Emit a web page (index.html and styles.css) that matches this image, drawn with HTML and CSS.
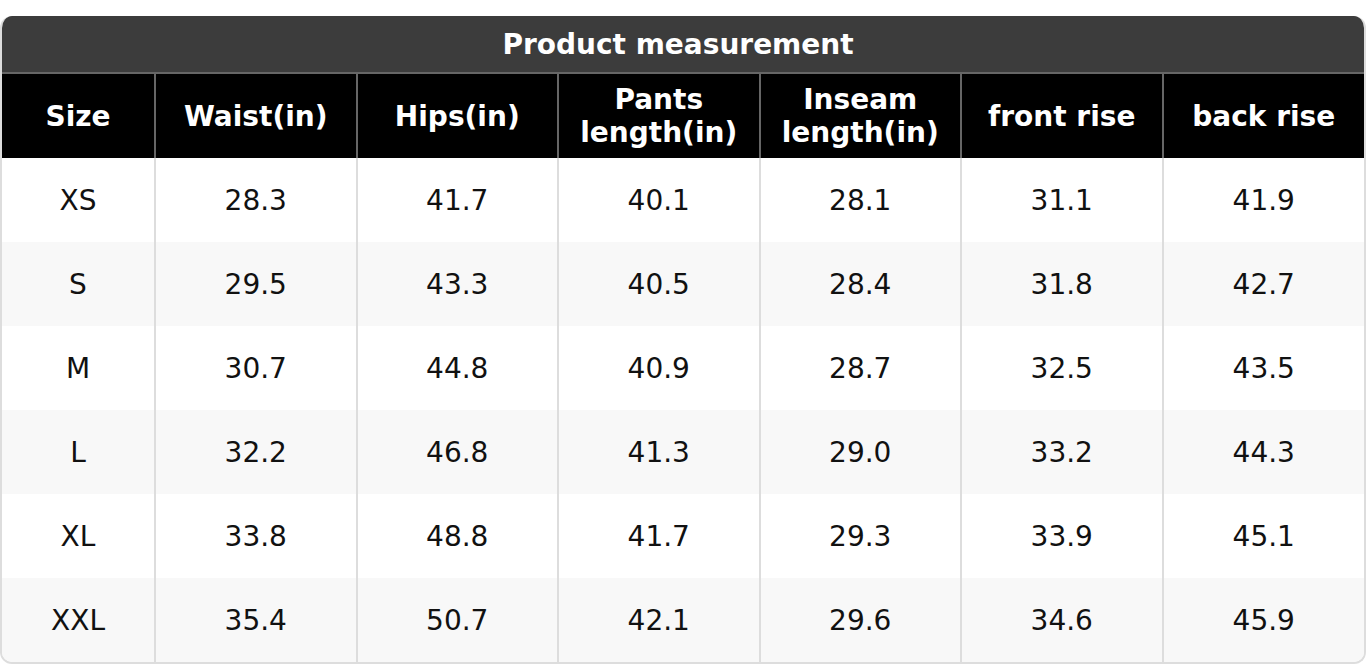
FILE: index.html
```html
<!DOCTYPE html>
<html>
<head>
<meta charset="utf-8">
<link rel="stylesheet" href="styles.css">
</head>
<body>
<div class="chart">
  <div class="title">Product measurement</div>
  <table class="grid">
    <colgroup>
      <col class="c-size"><col><col><col><col><col><col>
    </colgroup>
    <thead>
      <tr>
        <th>Size</th><th>Waist(in)</th><th>Hips(in)</th><th>Pants<br>length(in)</th><th>Inseam<br>length(in)</th><th>front rise</th><th>back rise</th>
      </tr>
    </thead>
    <tbody>
      <tr><td>XS</td><td>28.3</td><td>41.7</td><td>40.1</td><td>28.1</td><td>31.1</td><td>41.9</td></tr>
      <tr><td>S</td><td>29.5</td><td>43.3</td><td>40.5</td><td>28.4</td><td>31.8</td><td>42.7</td></tr>
      <tr><td>M</td><td>30.7</td><td>44.8</td><td>40.9</td><td>28.7</td><td>32.5</td><td>43.5</td></tr>
      <tr><td>L</td><td>32.2</td><td>46.8</td><td>41.3</td><td>29.0</td><td>33.2</td><td>44.3</td></tr>
      <tr><td>XL</td><td>33.8</td><td>48.8</td><td>41.7</td><td>29.3</td><td>33.9</td><td>45.1</td></tr>
      <tr><td>XXL</td><td>35.4</td><td>50.7</td><td>42.1</td><td>29.6</td><td>34.6</td><td>45.9</td></tr>
    </tbody>
  </table>
</div>
</body>
</html>
```
FILE: styles.css
```css
html, body {
  margin: 0;
  padding: 0;
  background: #ffffff;
}
body {
  padding-top: 16px;
  font-family: "DejaVu Sans", sans-serif;
}
.chart {
  width: 1366px;
  box-sizing: border-box;
  border: 2px solid #dddddd;
  border-top: none;
  border-radius: 12px;
  overflow: hidden;
  background: #ffffff;
}
.title {
  background: #3c3c3c;
  color: #ffffff;
  font-weight: bold;
  font-size: 28px;
  height: 56px;
  box-sizing: border-box;
  padding-right: 10px;
  display: flex;
  align-items: center;
  justify-content: center;
  margin: 0 -2px;
}
.grid {
  width: 100%;
  border-collapse: collapse;
  table-layout: fixed;
}
.c-size {
  width: 153px;
}
.grid th {
  background: #000000;
  color: #ffffff;
  font-weight: bold;
  font-size: 28px;
  line-height: 33px;
  height: 85px;
  padding: 0 2px;
  border: 2px solid #666666;
  border-bottom: none;
  text-align: center;
  box-sizing: border-box;
}
.grid th:first-child { border-left: none; }
.grid th:last-child { border-right: none; }
.grid td {
  font-size: 28px;
  color: #111111;
  height: 84px;
  padding: 0;
  border: 2px solid #dddddd;
  border-top: none;
  border-bottom: none;
  text-align: center;
  box-sizing: border-box;
}
.grid td:first-child { border-left: none; }
.grid td:last-child { border-right: none; }
.grid tbody tr:nth-child(even) td {
  background: #f8f8f8;
}
```
